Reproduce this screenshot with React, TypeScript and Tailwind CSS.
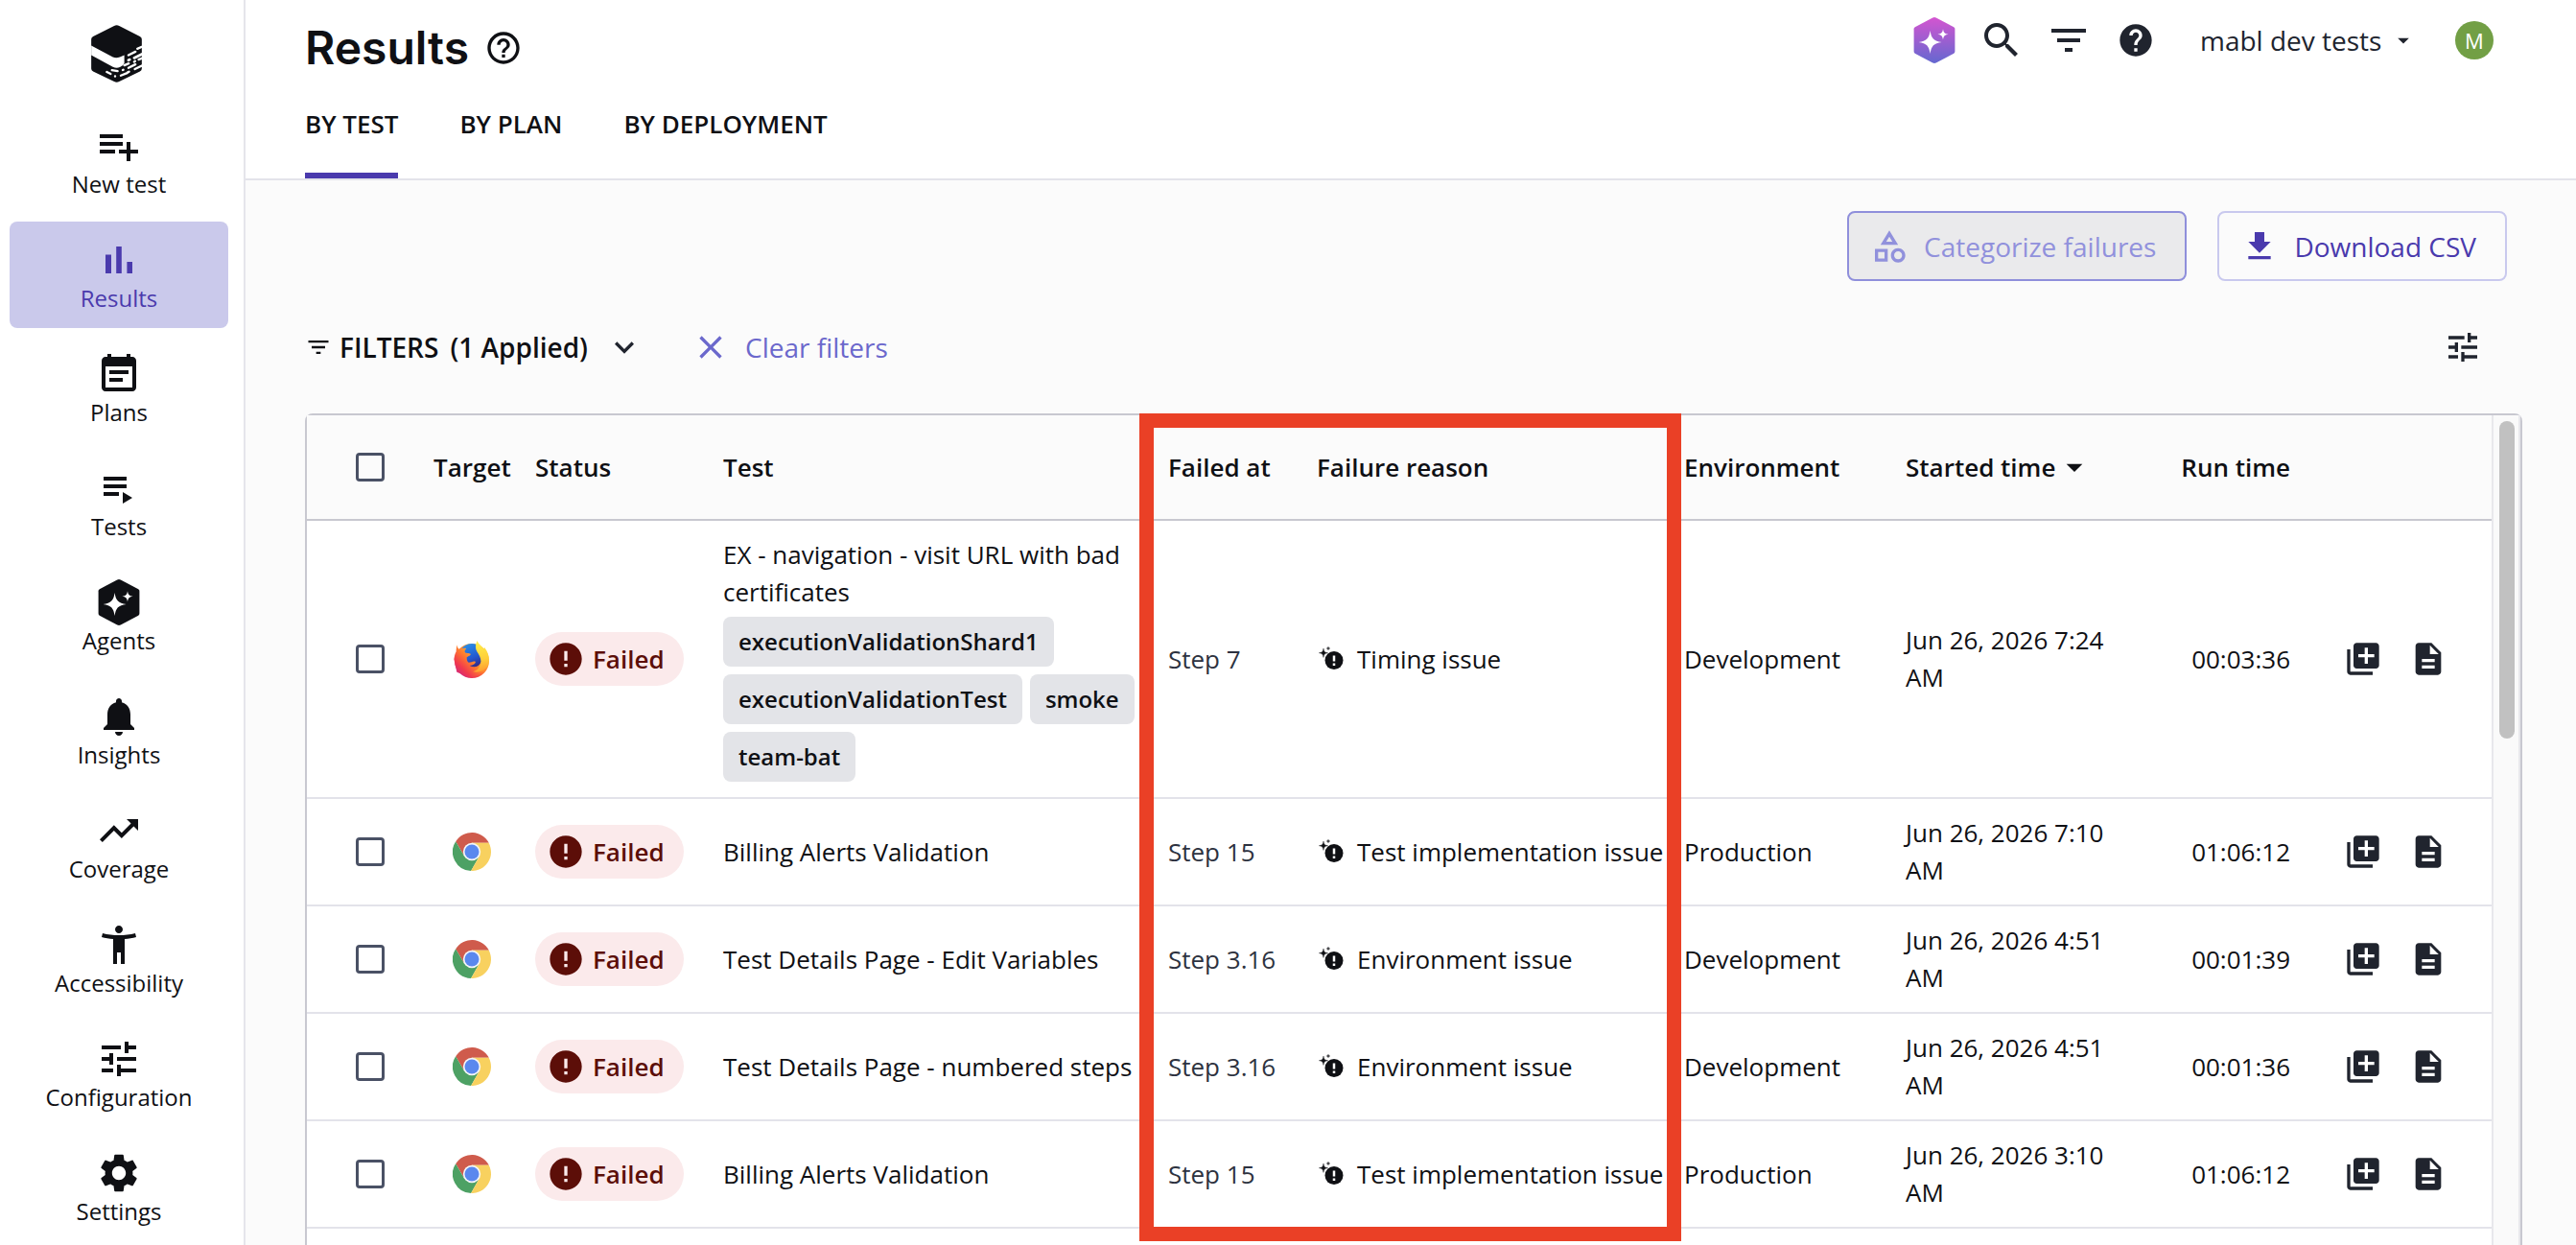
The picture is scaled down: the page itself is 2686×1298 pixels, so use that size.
import { useState } from 'react';

interface IconProps {
  path: string;
  className?: string;
}

interface Run {
  id: number;
  browser: 'firefox' | 'chrome';
  test: string;
  labels: string[];
  step: string;
  reason: string;
  environment: string;
  started: string;
  runTime: string;
}

const icons = {
  newTest: 'M14 10H2v2h12v-2zm0-4H2v2h12V6zm4 8v-4h-2v4h-4v2h4v4h2v-4h4v-2h-4zM2 16h8v-2H2v2z',
  results: 'M5 9.2h3V19H5zM10.6 5h2.8v14h-2.8zm5.6 8H19v6h-2.8z',
  plans:
    'M17 10H7v2h10v-2zm2-7h-1V1.5h-2V3H8V1.5H6V3H5c-1.11 0-1.99.9-1.99 2L3 19c0 1.1.89 2 2 2h14c1.1 0 2-.9 2-2V5c0-1.1-.9-2-2-2zm0 16H5V8h14v11zm-5-5H7v2h7v-2z',
  tests: 'M4 10h12v2H4zm0-4h12v2H4zm0 8h8v2H4zm10 0v6l5-3z',
  insights:
    'M12 22c1.1 0 2-.9 2-2h-4c0 1.1.89 2 2 2zm6-6v-5c0-3.07-1.64-5.64-4.5-6.32V4c0-.83-.67-1.5-1.5-1.5s-1.5.67-1.5 1.5v.68C7.63 5.36 6 7.92 6 11v5l-2 2v1h16v-1l-2-2z',
  coverage: 'M16 6l2.29 2.29-4.88 4.88-4-4L2 16.59 3.41 18l6-6 4 4 6.3-6.29L22 12V6z',
  accessibility:
    'M20.5 6c-2.61.7-5.67 1-8.5 1s-5.89-.3-8.5-1L3 8c1.86.5 4 .83 6 1v13h2v-6h2v6h2V9c2-.17 4.14-.5 6-1l-.5-2zM12 6c1.1 0 2-.9 2-2s-.9-2-2-2-2 .9-2 2 .9 2 2 2z',
  tune: 'M3 17v2h6v-2H3zM3 5v2h10V5H3zm10 16v-2h8v-2h-8v-2h-2v6h2zM7 9v2H3v2h4v2h2V9H7zm14 4v-2H11v2h10zm-6-4h2V7h4V5h-4V3h-2v6z',
  settings:
    'M19.14 12.94c.04-.3.06-.61.06-.94 0-.32-.02-.64-.07-.94l2.03-1.58c.18-.14.23-.41.12-.61l-1.92-3.32c-.12-.22-.37-.29-.59-.22l-2.39.96c-.5-.38-1.03-.7-1.62-.94l-.36-2.54c-.04-.24-.24-.41-.48-.41h-3.84c-.24 0-.43.17-.47.41l-.36 2.54c-.59.24-1.13.57-1.62.94l-2.39-.96c-.22-.08-.47 0-.59.22L2.74 8.87c-.12.21-.08.47.12.61l2.03 1.58c-.05.3-.09.63-.09.94s.02.64.07.94l-2.03 1.58c-.18.14-.23.41-.12.61l1.92 3.32c.12.22.37.29.59.22l2.39-.96c.5.38 1.03.7 1.62.94l.36 2.54c.05.24.24.41.48.41h3.84c.24 0 .44-.17.47-.41l.36-2.54c.59-.24 1.13-.56 1.62-.94l2.39.96c.22.08.47 0 .59-.22l1.92-3.32c.12-.22.07-.47-.12-.61l-2.01-1.58zM12 15.6c-1.98 0-3.6-1.62-3.6-3.6s1.62-3.6 3.6-3.6 3.6 1.62 3.6 3.6-1.62 3.6-3.6 3.6z',
  helpOutline:
    'M11 18h2v-2h-2v2zm1-16C6.48 2 2 6.48 2 12s4.48 10 10 10 10-4.48 10-10S17.52 2 12 2zm0 18c-4.41 0-8-3.59-8-8s3.59-8 8-8 8 3.59 8 8-3.59 8-8 8zm0-14c-2.21 0-4 1.79-4 4h2c0-1.1.9-2 2-2s2 .9 2 2c0 2-3 1.75-3 5h2c0-2.25 3-2.5 3-5 0-2.21-1.79-4-4-4z',
  help: 'M12 2C6.48 2 2 6.48 2 12s4.48 10 10 10 10-4.48 10-10S17.52 2 12 2zm1 17h-2v-2h2v2zm2.07-7.75l-.9.92C13.45 12.9 13 13.5 13 15h-2v-.5c0-1.1.45-2.1 1.17-2.83l1.24-1.26c.37-.36.59-.86.59-1.41 0-1.1-.9-2-2-2s-2 .9-2 2H8c0-2.21 1.79-4 4-4s4 1.79 4 4c0 .88-.36 1.68-.93 2.25z',
  search:
    'M15.5 14h-.79l-.28-.27C15.41 12.59 16 11.11 16 9.5 16 5.91 13.09 3 9.5 3S3 5.91 3 9.5 5.91 16 9.5 16c1.61 0 3.09-.59 4.23-1.57l.27.28v.79l5 4.99L20.49 19l-4.99-5zm-6 0C7.01 14 5 11.99 5 9.5S7.01 5 9.5 5 14 7.01 14 9.5 11.99 14 9.5 14z',
  filter: 'M10 18h4v-2h-4v2zM3 6v2h18V6H3zm3 7h12v-2H6v2z',
  caret: 'M7 10l5 5 5-5z',
  expand: 'M16.59 8.59L12 13.17 7.41 8.59 6 10l6 6 6-6z',
  close: 'M19 6.41L17.59 5 12 10.59 6.41 5 5 6.41 10.59 12 5 17.59 6.41 19 12 13.41 17.59 19 19 17.59 13.41 12z',
  category:
    'M12 2l-5.5 9h11L12 2zm0 3.84L13.93 9h-3.87L12 5.84zM17.5 13c-2.49 0-4.5 2.01-4.5 4.5s2.01 4.5 4.5 4.5 4.5-2.01 4.5-4.5-2.01-4.5-4.5-4.5zm0 7c-1.38 0-2.5-1.12-2.5-2.5s1.12-2.5 2.5-2.5 2.5 1.12 2.5 2.5-1.12 2.5-2.5 2.5zM3 21.5h8v-8H3v8zm2-6h4v4H5v-4z',
  download: 'M19 9h-4V3H9v6H5l7 7 7-7zM5 18v2h14v-2H5z',
  error: 'M12 2C6.48 2 2 6.48 2 12s4.48 10 10 10 10-4.48 10-10S17.52 2 12 2zm1 15h-2v-2h2v2zm0-4h-2V7h2v6z',
  addToLibrary:
    'M4 6H2v14c0 1.1.9 2 2 2h14v-2H4V6zm16-4H8c-1.1 0-2 .9-2 2v12c0 1.1.9 2 2 2h12c1.1 0 2-.9 2-2V4c0-1.1-.9-2-2-2zm-1 9h-4v4h-2v-4H9V9h4V5h2v4h4v2z',
  description:
    'M14 2H6c-1.1 0-1.99.9-1.99 2L4 20c0 1.1.89 2 1.99 2H18c1.1 0 2-.9 2-2V8l-6-6zm2 16H8v-2h8v2zm0-4H8v-2h8v2zm-3-5V3.5L18.5 9H13z',
};

const navItems = [
  { label: 'New test', icon: icons.newTest },
  { label: 'Results', icon: icons.results },
  { label: 'Plans', icon: icons.plans },
  { label: 'Tests', icon: icons.tests },
  { label: 'Agents', icon: null },
  { label: 'Insights', icon: icons.insights },
  { label: 'Coverage', icon: icons.coverage },
  { label: 'Accessibility', icon: icons.accessibility },
  { label: 'Configuration', icon: icons.tune },
  { label: 'Settings', icon: icons.settings },
];

const tabs = ['BY TEST', 'BY PLAN', 'BY DEPLOYMENT'];

const runs: Run[] = [
  {
    id: 1,
    browser: 'firefox',
    test: 'EX - navigation - visit URL with bad certificates',
    labels: ['executionValidationShard1', 'executionValidationTest', 'smoke', 'team-bat'],
    step: 'Step 7',
    reason: 'Timing issue',
    environment: 'Development',
    started: 'Jun 26, 2026 7:24 AM',
    runTime: '00:03:36',
  },
  {
    id: 2,
    browser: 'chrome',
    test: 'Billing Alerts Validation',
    labels: [],
    step: 'Step 15',
    reason: 'Test implementation issue',
    environment: 'Production',
    started: 'Jun 26, 2026 7:10 AM',
    runTime: '01:06:12',
  },
  {
    id: 3,
    browser: 'chrome',
    test: 'Test Details Page - Edit Variables',
    labels: [],
    step: 'Step 3.16',
    reason: 'Environment issue',
    environment: 'Development',
    started: 'Jun 26, 2026 4:51 AM',
    runTime: '00:01:39',
  },
  {
    id: 4,
    browser: 'chrome',
    test: 'Test Details Page - numbered steps',
    labels: [],
    step: 'Step 3.16',
    reason: 'Environment issue',
    environment: 'Development',
    started: 'Jun 26, 2026 4:51 AM',
    runTime: '00:01:36',
  },
  {
    id: 5,
    browser: 'chrome',
    test: 'Billing Alerts Validation',
    labels: [],
    step: 'Step 15',
    reason: 'Test implementation issue',
    environment: 'Production',
    started: 'Jun 26, 2026 3:10 AM',
    runTime: '01:06:12',
  },
];

function Icon({ path, className = 'size-10' }: IconProps) {
  return (
    <svg viewBox="0 0 24 24" fill="currentColor" className={`${className} shrink-0`} aria-hidden="true">
      <path d={path} />
    </svg>
  );
}

function AgentIcon({ gradient = false }: { gradient?: boolean }) {
  return (
    <svg viewBox="0 0 24 24" className="size-12 shrink-0" aria-hidden="true">
      {gradient && (
        <defs>
          <linearGradient id="agent" x1="0" y1="0" x2="0" y2="1">
            <stop offset="0" stopColor="#d455d0" />
            <stop offset="1" stopColor="#6468d0" />
          </linearGradient>
        </defs>
      )}
      <path
        fill={gradient ? 'url(#agent)' : 'currentColor'}
        d="M11.1.25a2 2 0 0 1 1.8 0l9 4.75c.5.27.8.6.8 1.2v11.6c0 .6-.3.93-.8 1.2l-9 4.75a2 2 0 0 1-1.8 0l-9-4.75c-.5-.27-.8-.6-.8-1.2V6.2c0-.6.3-.93.8-1.2z"
      />
      <path
        fill="#fff"
        d="M9.8 7c.6 4.1 1.9 5.4 6 6-4.1.6-5.4 1.9-6 6-.6-4.1-1.9-5.4-6-6 4.1-.6 5.4-1.9 6-6zM16.5 6.1c.3 1.9.9 2.5 2.8 2.8-1.9.3-2.5.9-2.8 2.8-.3-1.9-.9-2.5-2.8-2.8 1.9-.3 2.5-.9 2.8-2.8z"
      />
    </svg>
  );
}

function Logo() {
  return (
    <svg viewBox="31 29 159 181" className="ml-[95px] h-[60px] w-[53px]" role="img" aria-label="mabl">
      <path
        fill="#0f1014"
        d="M103 32q8-4 16 0l65 33q6 3 6 9v92q0 6-6 9l-65 32q-8 4-16 0l-66-32q-6-3-6-9V74q0-6 6-9z"
      />
      <path fill="#fff" d="M31 94l68 36q10 5 22 0l14-6v26q-2 7-14 12-11 4-22-1L31 124z" />
      <g stroke="#fff" strokeWidth="7" strokeLinecap="round" fill="none">
        <path d="M148 124l22-11M176 104l14-6" />
        <path d="M148 140l4-2M166 133l24-12" strokeWidth="8" />
        <path d="M135 156l14-6M166 145l3-2M180 138l10-4" />
        <path d="M96 171l18 3M130 171l2-1M148 164l22-11" />
        <path d="M80 177l12 6M146 178l4-2M168 168l22-11" />
        <path d="M106 190v1M124 188l20-8" />
      </g>
    </svg>
  );
}

function FirefoxIcon() {
  return (
    <svg viewBox="24 20 120 120" className="size-10" role="img" aria-label="Firefox">
      <defs>
        <linearGradient id="ff-body" x1="0.9" y1="0.1" x2="0.15" y2="0.9">
          <stop offset="0.1" stopColor="#ffc83c" />
          <stop offset="0.5" stopColor="#ff7a2e" />
          <stop offset="0.8" stopColor="#f0384e" />
          <stop offset="1" stopColor="#d42a78" />
        </linearGradient>
        <linearGradient id="ff-globe" x1="0.2" y1="0" x2="0.6" y2="1">
          <stop offset="0" stopColor="#2a93e8" />
          <stop offset="0.6" stopColor="#2458d0" />
          <stop offset="1" stopColor="#37247c" />
        </linearGradient>
        <linearGradient id="ff-flame" x1="0.4" y1="0" x2="0.5" y2="1">
          <stop offset="0" stopColor="#fff04a" />
          <stop offset="0.6" stopColor="#ffcf3a" />
          <stop offset="1" stopColor="#ff9a2e" />
        </linearGradient>
      </defs>
      <circle cx="84" cy="86" r="54" fill="url(#ff-body)" />
      <circle cx="84" cy="71" r="39" fill="url(#ff-globe)" />
      <path
        fill="url(#ff-body)"
        d="M38 36c0 8 3 12 7 14 7-3 15-4 22-3-4 4-6 8-5 11 2 5 14 3 18 6 2 5-8 7-12 11 0 7 1 13 6 16 8 0 14-6 21-3 3 5-8 12-18 13 14 8 30 4 36-12l12 30-42 20-46-18-9-40c2-10 3-18 7-24 0-8 1-16 3-21z"
      />
      <path
        fill="url(#ff-flame)"
        d="M101 23c-6 12-7 24-1 34 9 14 16 26 10 42-4 12-12 18-22 21 22 5 42-6 48-24 4-17 1-35-13-53l-1 9c-5-12-17-17-21-29z"
      />
    </svg>
  );
}

function ChromeIcon() {
  return (
    <svg viewBox="0 0 48 48" className="size-10" role="img" aria-label="Chrome">
      <path fill="#cf5b4c" d="M24 13h21.3A24 24 0 0 0 3.8 11l10.7 18.5L24 24z" />
      <path fill="#4da164" d="M3.8 11a24 24 0 0 0 19.1 37l10.6-18.5L24 24l-9.5 5.5z" />
      <path fill="#f8d15f" d="M22.9 48a24 24 0 0 0 22.4-35H24v11l9.5 5.5z" />
      <circle cx="24" cy="24" r="11" fill="#f4f5f7" />
      <circle cx="24" cy="24" r="9" fill="#5a88ee" />
    </svg>
  );
}

function ReasonIcon() {
  return (
    <svg viewBox="0 0 28 28" className="size-7 shrink-0" aria-hidden="true">
      <path
        fill="#0f1014"
        stroke="#0f1014"
        strokeWidth="0.4"
        d="M7 3c.5 3.4 1.3 4.200 4.600 4.700-3.300.5-4.100 1.300-4.600 4.700-.5-3.400-1.300-4.200-4.600-4.700C5.700 7.200 6.500 6.400 7 3zM12 1.200c.2 1.300.5 1.600 1.800 1.800-1.300.2-1.600.5-1.800 1.800-.2-1.300-.5-1.600-1.800-1.800 1.300-.2 1.600-.5 1.800-1.800z"
      />
      <circle cx="18" cy="15.500" r="9.500" fill="#0f1014" />
      <path stroke="#fff" strokeWidth="2.500" d="M18 10.500v6M18 18.500V21" />
    </svg>
  );
}

function Checkbox({ label }: { label: string }) {
  return (
    <input
      type="checkbox"
      aria-label={label}
      className="ml-[51px] block size-[30px] appearance-none rounded-sm border-3 border-[#4a5165] checked:bg-[#4a3aad]"
    />
  );
}

function Sidebar() {
  return (
    <aside className="w-64 shrink-0 border-r-2 border-[#e5e5eb] bg-white pt-[26px]">
      <Logo />
      <nav className="mt-[26px] flex flex-col gap-2 pr-4 pl-2.5">
        {navItems.map((item) => (
          <a
            key={item.label}
            href="#"
            className={`flex flex-col items-center rounded-lg py-4 text-2xl/[31px] ${
              item.label === 'Results' ? 'bg-[#cac9eb] text-[#4a3aad]' : 'text-[#0f1014]'
            }`}
          >
            {item.icon ? <Icon path={item.icon} className="size-12" /> : <AgentIcon />}
            {item.label}
          </a>
        ))}
      </nav>
    </aside>
  );
}

function Header() {
  const [activeTab, setActiveTab] = useState('BY TEST');

  return (
    <header className="flex items-start justify-between border-b-2 border-[#e3e3ea] bg-white pr-[86px] pl-[62px]">
      <div className="pt-5">
        <div className="flex items-center gap-4">
          <h1 className="font-['Inter'] text-5xl/[60px] font-semibold">Results</h1>
          <button aria-label="About results">
            <Icon path={icons.helpOutline} />
          </button>
        </div>
        <div role="tablist" className="mt-[30px] flex gap-16">
          {tabs.map((tab) => (
            <button
              key={tab}
              role="tab"
              aria-selected={activeTab === tab}
              onClick={() => setActiveTab(tab)}
              className={`border-b-6 pb-[31px] text-[26px]/[39px] font-semibold ${
                activeTab === tab ? 'border-[#4a3aad]' : 'border-transparent'
              }`}
            >
              {tab}
            </button>
          ))}
        </div>
      </div>

      <div className="flex items-center pt-[18px] text-[#20242e]">
        <button aria-label="Ask agent" className="flex w-[70px] justify-center">
          <AgentIcon gradient />
        </button>
        <button aria-label="Search" className="flex w-[70px] justify-center">
          <Icon path={icons.search} className="size-12" />
        </button>
        <button aria-label="Filter" className="flex w-[70px] justify-center">
          <Icon path={icons.filter} className="size-12" />
        </button>
        <button aria-label="Help" className="flex w-[70px] justify-center">
          <Icon path={icons.help} />
        </button>
        <div className="ml-8 flex items-center">
          <select aria-label="Workspace" className="appearance-none bg-transparent pr-8 text-[28px]/10">
            <option>mabl dev tests</option>
          </select>
          <Icon path={icons.caret} className="pointer-events-none -ml-6 size-7" />
        </div>
        <button className="ml-10 flex size-10 items-center justify-center rounded-full bg-[#729f45] text-[22px] text-white">
          M
        </button>
      </div>
    </header>
  );
}

function ResultsTable() {
  return (
    <div className="relative mt-[49px] flex flex-1 rounded-t-lg border-2 border-b-0 border-[#c8c8d0]">
      <div className="flex-1 bg-white">
        <table className="w-full table-fixed border-separate border-spacing-0 text-left text-[26px]/[39px]">
          <colgroup>
            <col className="w-[132px]" />
            <col className="w-[106px]" />
            <col className="w-[196px]" />
            <col className="w-[464px]" />
            <col className="w-[155px]" />
            <col className="w-[383px]" />
            <col />
            <col className="w-[240px]" />
            <col className="w-[161px]" />
            <col className="w-[210px]" />
          </colgroup>
          <thead>
            <tr className="h-[110px] bg-[#fbfbfb] *:border-b-2 *:border-[#c8c8d0] *:font-semibold">
              <th>
                <Checkbox label="Select all" />
              </th>
              <th>Target</th>
              <th>Status</th>
              <th>Test</th>
              <th>Failed at</th>
              <th>Failure reason</th>
              <th>Environment</th>
              <th>
                <button className="flex items-center">
                  Started time
                  <Icon path={icons.caret} />
                </button>
              </th>
              <th className="text-right">Run time</th>
              <th aria-label="Actions" />
            </tr>
          </thead>
          <tbody>
            {runs.map((run) => (
              <tr key={run.id} className="*:border-b-2 *:border-[#e3e3ea] *:py-4">
                <td>
                  <Checkbox label={`Select ${run.test}`} />
                </td>
                <td className="pl-5">{run.browser === 'firefox' ? <FirefoxIcon /> : <ChromeIcon />}</td>
                <td>
                  <span className="inline-flex h-14 items-center gap-2 rounded-full bg-[#fbeaeb] pr-5 pl-3 align-middle font-semibold text-[#5c0e08]">
                    <Icon path={icons.error} />
                    Failed
                  </span>
                </td>
                <td className="pr-8">
                  {run.test}
                  {run.labels.length > 0 && (
                    <ul className="mt-[6px] flex flex-wrap gap-2">
                      {run.labels.map((label) => (
                        <li key={label} className="rounded-lg bg-[#e3e4e8] px-4 text-2xl/[52px] font-semibold">
                          {label}
                        </li>
                      ))}
                    </ul>
                  )}
                </td>
                <td className="text-[#2d3240]">{run.step}</td>
                <td>
                  <div className="flex items-center gap-3.5 whitespace-nowrap">
                    <ReasonIcon />
                    {run.reason}
                  </div>
                </td>
                <td>{run.environment}</td>
                <td className="pr-6">{run.started}</td>
                <td className="text-right">{run.runTime}</td>
                <td>
                  <div className="flex gap-7 pl-14 text-[#20242e]">
                    <button aria-label="Add to plan">
                      <Icon path={icons.addToLibrary} />
                    </button>
                    <button aria-label="View log">
                      <Icon path={icons.description} />
                    </button>
                  </div>
                </td>
              </tr>
            ))}
          </tbody>
        </table>
      </div>
      <div className="w-[30px] border-x-2 border-[#e8e8ec] bg-[#fafafa] px-1 pt-1.5">
        <div className="ml-0.5 h-[331px] w-4 rounded-full bg-[#c1c1c1]" />
      </div>

      {/* Callout around the failure columns */}
      <div className="pointer-events-none absolute -top-0.5 left-[868px] h-[863px] w-[565px] border-15 border-[#ea4026]" />
    </div>
  );
}

export default function App() {
  return (
    <div className="flex h-screen overflow-hidden bg-[#fbfbfb] font-['Open_Sans',sans-serif] text-[#0f1014]">
      <Sidebar />
      <div className="flex min-w-0 flex-1 flex-col">
        <Header />
        <main className="flex flex-1 flex-col pt-8 pr-14 pl-[62px]">
          <div className="flex justify-end gap-8 pr-4 text-[28px]/[42px]">
            <button
              disabled
              className="flex h-[73px] items-center gap-4 rounded-lg border-2 border-[#8f8fdb] bg-[#eaeaec] pr-[30px] pl-[22px] text-[#9191dc]"
            >
              <Icon path={icons.category} />
              Categorize failures
            </button>
            <button className="flex h-[73px] items-center gap-4 rounded-lg border-2 border-[#c9c9ee] pr-[30px] pl-[22px] text-[#4a3aad]">
              <Icon path={icons.download} />
              Download CSV
            </button>
          </div>

          <div className="mt-[49px] flex h-10 items-center text-[28px]/10">
            <button className="flex items-center font-semibold">
              <Icon path={icons.filter} className="mr-2 size-7" />
              FILTERS
              <span className="ml-3">(1 Applied)</span>
              <Icon path={icons.expand} className="ml-[18px] size-10 text-[#20242e]" />
            </button>
            <button className="ml-[50px] flex items-center gap-4 text-[#6b68cc]">
              <Icon path={icons.close} />
              Clear filters
            </button>
            <button aria-label="Table settings" className="mr-[42px] ml-auto text-[#20242e]">
              <Icon path={icons.tune} />
            </button>
          </div>

          <ResultsTable />
        </main>
      </div>
    </div>
  );
}
